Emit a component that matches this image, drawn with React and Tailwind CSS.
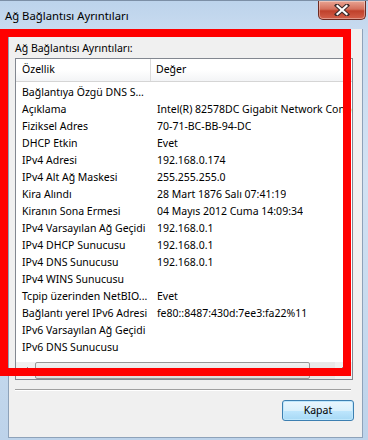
const rows = [
  ["Bağlantıya Özgü DNS S...", ""],
  ["Açıklama", "Intel(R) 82578DC Gigabit Network Connection"],
  ["Fiziksel Adres", "70-71-BC-BB-94-DC"],
  ["DHCP Etkin", "Evet"],
  ["IPv4 Adresi", "192.168.0.174"],
  ["IPv4 Alt Ağ Maskesi", "255.255.255.0"],
  ["Kira Alındı", "28 Mart 1876 Salı 07:41:19"],
  ["Kiranın Sona Ermesi", "04 Mayıs 2012 Cuma 14:09:34"],
  ["IPv4 Varsayılan Ağ Geçidi", "192.168.0.1"],
  ["IPv4 DHCP Sunucusu", "192.168.0.1"],
  ["IPv4 DNS Sunucusu", "192.168.0.1"],
  ["IPv4 WINS Sunucusu", ""],
  ["Tcpip üzerinden NetBIO...", "Evet"],
  ["Bağlantı yerel IPv6 Adresi", "fe80::8487:430d:7ee3:fa22%11"],
  ["IPv6 Varsayılan Ağ Geçidi", ""],
  ["IPv6 DNS Sunucusu", ""],
];

function CloseButton() {
  return (
    <button
      type="button"
      className="flex h-[19px] w-[48px] items-center justify-center rounded-b-[5px] border border-t-0 border-[#6d2a21] bg-[linear-gradient(180deg,#e8a493_0%,#d4705c_45%,#c0412b_55%,#d3604a_100%)] shadow-[inset_0_0_0_1px_rgba(255,255,255,0.35)]"
      aria-label="Kapat"
    >
      <svg width="16" height="12" viewBox="0 0 16 12">
        <path d="M3 1.5 L13 10.5 M13 1.5 L3 10.5" stroke="#3b2a2a" strokeWidth="4.2" strokeLinecap="square" />
        <path d="M3.5 2 L12.5 10 M12.5 2 L3.5 10" stroke="#ffffff" strokeWidth="2.2" strokeLinecap="square" />
      </svg>
    </button>
  );
}

function ScrollBar() {
  return (
    <div className="flex h-[17px] shrink-0 bg-[#f0f0f0]">
      <div className="flex w-[19px] items-center justify-center">
        <svg width="4" height="7" viewBox="0 0 4 7">
          <path d="M4 0 L0 3.5 L4 7 Z" fill="#4d4d4d" />
        </svg>
      </div>
      <div className="flex w-[275px] items-center justify-center rounded-[2px] border border-[#979797] bg-[linear-gradient(180deg,#f2f2f2,#dcdcdc)]">
        <div className="flex gap-[1px]">
          <span className="h-[6px] w-[1px] bg-[#666]" />
          <span className="h-[6px] w-[1px] bg-[#666]" />
          <span className="h-[6px] w-[1px] bg-[#666]" />
        </div>
      </div>
      <div className="flex-1 bg-[#e8e8e8]" />
      <div className="flex w-[17px] items-center justify-center">
        <svg width="4" height="7" viewBox="0 0 4 7">
          <path d="M0 0 L4 3.5 L0 7 Z" fill="#4d4d4d" />
        </svg>
      </div>
    </div>
  );
}

export default function App() {
  return (
    <div
      className="relative flex h-[440px] w-[368px] flex-col overflow-hidden bg-[linear-gradient(180deg,#bcd3eb_0%,#cadcf0_8%,#d2e2f3_40%,#bdd3ea_100%)] text-[10.5px] text-black"
      style={{ fontFamily: '"Noto Sans", "Liberation Sans", sans-serif' }}
    >
      {/* title bar */}
      <div className="flex h-[29px] shrink-0 items-start border-t border-[#7c8fa6]">
        <span className="mt-[7px] ml-[5px] text-[11.3px] leading-[15px]">Ağ Bağlantısı Ayrıntıları</span>
        <div className="ml-auto mr-[2px]">
          <CloseButton />
        </div>
      </div>

      {/* client area */}
      <div className="ml-[8px] flex h-[409px] w-[355px] flex-col border border-t-0 border-[#8ea2b9] bg-[#f0f0f0]">
        <div className="mt-[12px] ml-[6px] leading-[15px]">Ağ Bağlantısı Ayrıntıları:</div>

        <div className="mt-[2px] ml-[6px] flex h-[322px] w-[338px] flex-col border border-[#828790] bg-white">
          <div className="flex h-[23px] shrink-0 border-b border-[#d5d5d5] bg-[linear-gradient(180deg,#ffffff_0%,#ffffff_50%,#f3f4f6_100%)]">
            <div className="flex w-[135px] items-center border-r border-[#dcdcdc] pl-[6px]">Özellik</div>
            <div className="flex flex-1 items-center pl-[5px]">Değer</div>
          </div>
          <div className="flex-1 overflow-hidden pt-[2px]">
            {rows.map(([name, value]) => (
              <div key={name} className="flex h-[17px] items-center whitespace-nowrap leading-[17px]">
                <div className="w-[135px] shrink-0 overflow-hidden pl-[6px]">{name}</div>
                <div className="overflow-hidden pl-[6px]">{value}</div>
              </div>
            ))}
          </div>
          <ScrollBar />
        </div>

        <div className="mt-[9px] ml-[6px] h-[2px] w-[336px] border-t border-b border-t-[#a0a0a0] border-b-white" />

        <div className="mt-[9px] mr-[8px] flex justify-end">
          <button
            type="button"
            className="flex h-[21px] w-[72px] items-center justify-center rounded-[3px] border border-[#3c7fb1] bg-[linear-gradient(180deg,#eaf6fd_0%,#d9f0fc_50%,#bee6fd_51%,#a7d9f5_100%)] leading-[15px] shadow-[inset_0_0_0_1px_#bfe7fc]"
          >
            Kapat
          </button>
        </div>
      </div>

      {/* red highlight frame drawn over the dialog */}
      <div className="absolute top-[29px] left-0 h-[347px] w-[351px] border-[8px] border-[#ff0000]" />
    </div>
  );
}
